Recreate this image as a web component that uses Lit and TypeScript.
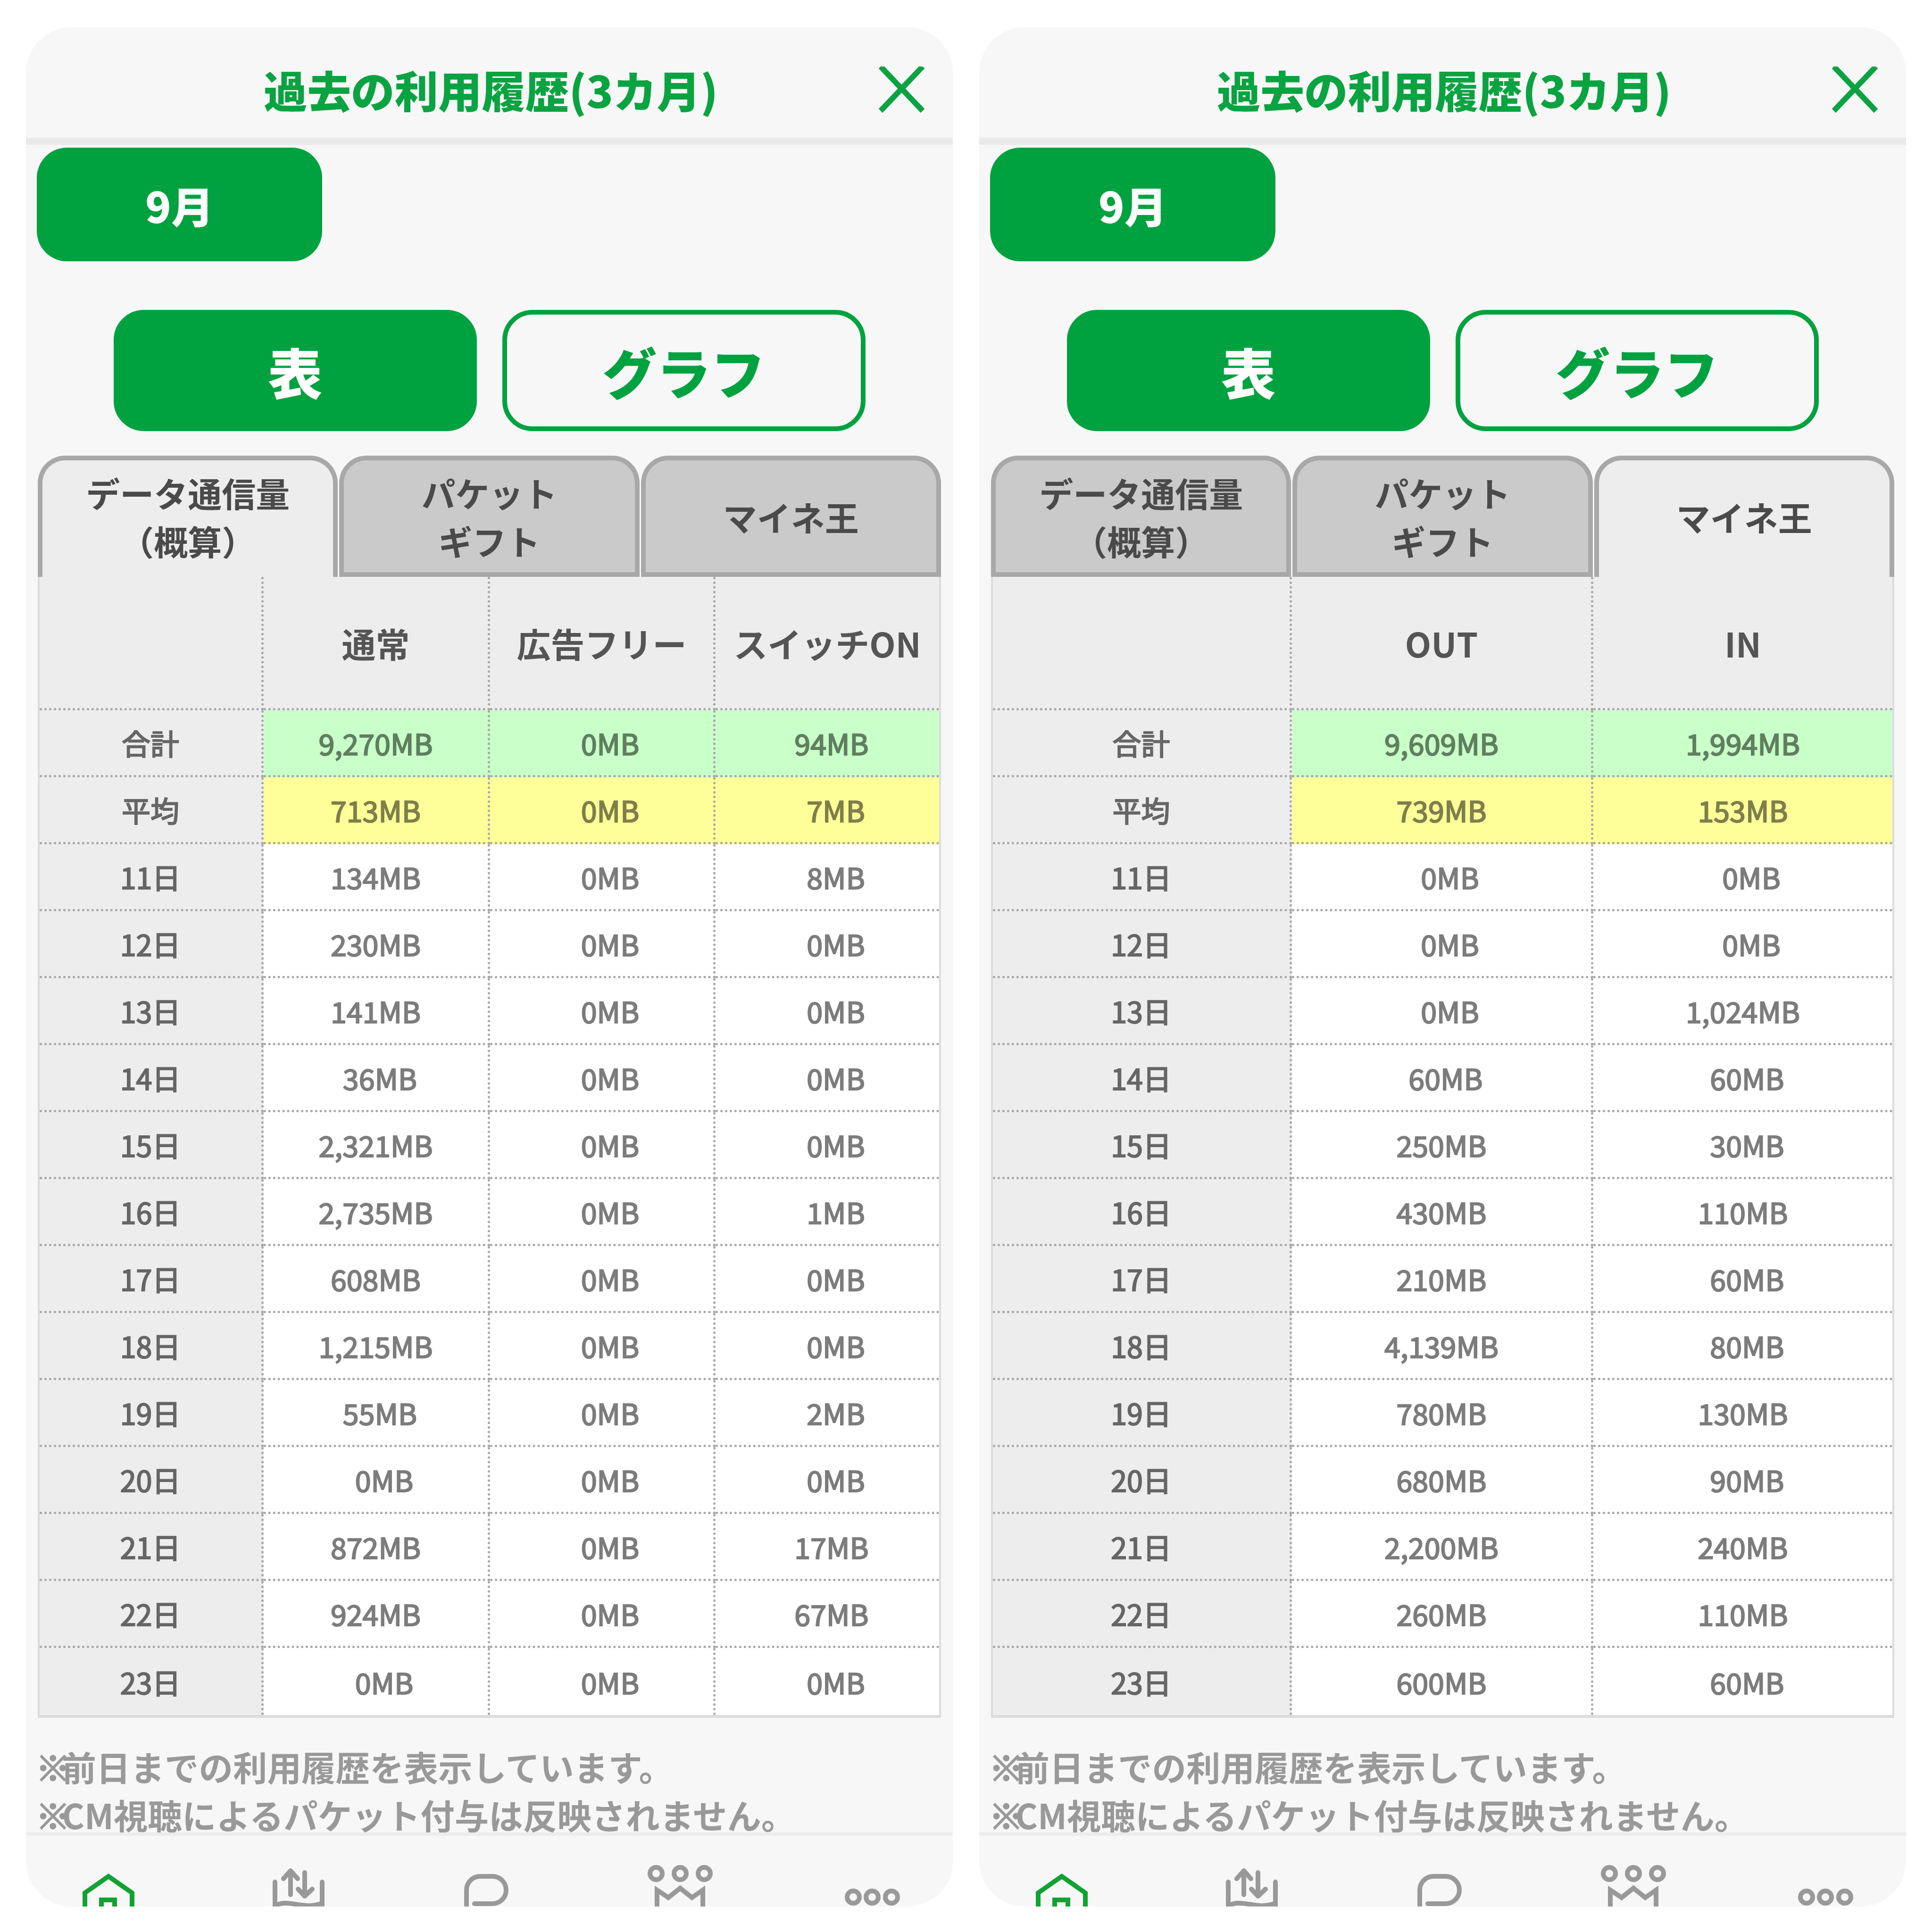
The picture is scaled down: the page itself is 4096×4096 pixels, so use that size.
import { LitElement, html, css, svg } from "lit";
import { customElement } from "lit/decorators.js";

const DAYS = [11, 12, 13, 14, 15, 16, 17, 18, 19, 20, 21, 22, 23];

interface Panel {
  active: number;
  columns: string;
  heads: string[];
  sum: string[];
  avg: string[];
  rows: string[][];
}

const LEFT: Panel = {
  active: 0,
  columns: "475px 480px 478px 1fr",
  heads: ["通常", "広告フリー", "スイッチON"],
  sum: ["9,270MB", "0MB", "94MB"],
  avg: ["713MB", "0MB", "7MB"],
  rows: [
    ["134MB", "0MB", "8MB"],
    ["230MB", "0MB", "0MB"],
    ["141MB", "0MB", "0MB"],
    ["36MB", "0MB", "0MB"],
    ["2,321MB", "0MB", "0MB"],
    ["2,735MB", "0MB", "1MB"],
    ["608MB", "0MB", "0MB"],
    ["1,215MB", "0MB", "0MB"],
    ["55MB", "0MB", "2MB"],
    ["0MB", "0MB", "0MB"],
    ["872MB", "0MB", "17MB"],
    ["924MB", "0MB", "67MB"],
    ["0MB", "0MB", "0MB"],
  ],
};

const RIGHT: Panel = {
  active: 2,
  columns: "634px 639px 1fr",
  heads: ["OUT", "IN"],
  sum: ["9,609MB", "1,994MB"],
  avg: ["739MB", "153MB"],
  rows: [
    ["0MB", "0MB"],
    ["0MB", "0MB"],
    ["0MB", "1,024MB"],
    ["60MB", "60MB"],
    ["250MB", "30MB"],
    ["430MB", "110MB"],
    ["210MB", "60MB"],
    ["4,139MB", "80MB"],
    ["780MB", "130MB"],
    ["680MB", "90MB"],
    ["2,200MB", "240MB"],
    ["260MB", "110MB"],
    ["600MB", "60MB"],
  ],
};

const TABS = [
  ["データ通信量", "（概算）"],
  ["パケット", "ギフト"],
  ["マイネ王"],
];

function padClass(v: string): string {
  const digits = v.replace(/[^0-9]/g, "").length;
  return digits === 1 ? "p2" : digits === 2 ? "p1" : "";
}

const homeIcon = svg`<path class="g" d="M10 175V128L60 93L110 128V175"/><path class="g" d="M45 175V143H73V175"/>`;
const dataIcon = svg`
  <path class="s" d="M43 132V82M28 98L43 81L58 98"/>
  <path class="s" d="M73 85V134M59 120L73 135L89 120"/>
  <path class="s" d="M10 105V170M110 105V170"/>
  <path class="s" d="M10 156C36 138 70 166 110 150"/>`;
const chatIcon = svg`<path class="s" d="M13 180V122A29 29 0 0 1 42 93H68A29 29 0 0 1 97 122A29 29 0 0 1 68 151H30"/>`;
const crownIcon = svg`
  <circle class="s" cx="12" cy="87" r="13"/><circle class="s" cx="63" cy="87" r="13"/><circle class="s" cx="114" cy="87" r="13"/>
  <path class="m" d="M14 180V122L38 138L63 118L88 138L111 122V180"/>`;
const moreIcon = svg`<circle class="s" cx="27" cy="137" r="13"/><circle class="s" cx="67" cy="137" r="13"/><circle class="s" cx="108" cy="137" r="13"/>`;

@customElement("app-root")
export class AppRoot extends LitElement {
  static styles = css`
    :host {
      display: flex;
      width: 4096px;
      height: 4096px;
      box-sizing: border-box;
      padding: 58px 55px 54px;
      gap: 56px;
      background: #fff;
      font-family: "Noto Sans CJK JP", "Noto Sans", sans-serif;
    }
    .panel {
      width: 1965px;
      height: 3984px;
      background: #f7f7f7;
      border-radius: 96px;
      overflow: hidden;
      display: flex;
      flex-direction: column;
    }
    .header {
      position: relative;
      flex: none;
      height: 234px;
      border-bottom: 15px solid #e9e9e9;
      display: flex;
      align-items: center;
      justify-content: center;
    }
    .title {
      font-size: 92.5px;
      font-weight: 900;
      color: #0aa341;
      line-height: 1;
      margin-top: 28px;
      margin-left: 6px;
    }
    .close {
      position: absolute;
      left: 1808px;
      top: 83px;
      width: 97px;
      height: 100px;
    }
    .close path {
      stroke: #0aa341;
      stroke-width: 12;
      fill: none;
    }
    .main {
      flex: 1;
      min-height: 0;
      overflow: hidden;
      padding: 6px 25px 0;
    }
    .month {
      width: 605px;
      height: 241px;
      margin-left: -2px;
      border-radius: 64px;
      background: #00a23f;
      color: #fff;
      font-size: 90px;
      font-weight: 900;
      display: flex;
      align-items: center;
      justify-content: center;
    }
    .modes {
      display: flex;
      justify-content: center;
      gap: 54px;
      margin-top: 103px;
    }
    .mode {
      width: 770px;
      height: 257px;
      box-sizing: border-box;
      border-radius: 64px;
      font-size: 115px;
      font-weight: 900;
      display: flex;
      align-items: center;
      justify-content: center;
      border: 10px solid #00a23f;
    }
    .mode.on {
      background: #00a23f;
      color: #fff;
    }
    .mode.off {
      color: #00a23f;
    }
    .tabs {
      display: grid;
      grid-template-columns: repeat(3, 1fr);
      gap: 3px;
      margin-top: 52px;
      height: 257px;
    }
    .tab {
      box-sizing: border-box;
      border: 10px solid #a8a8a8;
      border-radius: 58px 58px 0 0;
      background: #cacaca;
      color: #4a4a4a;
      font-size: 72px;
      font-weight: 700;
      line-height: 102px;
      text-align: center;
      display: flex;
      flex-direction: column;
      justify-content: center;
    }
    .tab.on {
      background: #ededed;
      border-bottom: none;
      padding-bottom: 10px;
    }
    .table {
      display: grid;
      grid-template-rows: 283px;
      grid-auto-rows: 142px;
      box-sizing: border-box;
      border-left: 4px solid #dcdcdc;
      border-right: 4px solid #dcdcdc;
      border-bottom: 6px solid #dcdcdc;
    }
    .cell {
      box-sizing: border-box;
      display: flex;
      align-items: center;
      justify-content: center;
      border-right: 5px dotted #a6a6a6;
      border-bottom: 5px dotted #a6a6a6;
      font-size: 61px;
      font-weight: 400;
      -webkit-text-stroke: 2.2px currentColor;
      color: #7c7c7c;
      background: #fff;
      white-space: nowrap;
    }
    .cell.last-col {
      border-right: none;
    }
    .cell.last-row {
      border-bottom: none;
    }
    .cell.p1 {
      padding-left: 18px;
    }
    .cell.p2 {
      padding-left: 36px;
    }
    .cell.side {
      background: #ededed;
      color: #666;
    }
    .cell.head {
      background: #ededed;
      color: #555;
      font-size: 72px;
      font-weight: 700;
      -webkit-text-stroke: 0;
    }
    .cell.sum {
      background: #c9ffc9;
      color: #5f7f5f;
    }
    .cell.avg {
      background: #ffff99;
      color: #7f7f4c;
    }
    .notes {
      margin-top: 52px;
      margin-left: -4px;
      font-size: 72.5px;
      line-height: 102px;
      font-weight: 700;
      color: #999;
      white-space: nowrap;
    }
    .mark {
      letter-spacing: -17px;
      -webkit-text-stroke: 3px currentColor;
    }
    .nav {
      flex: none;
      height: 157px;
      overflow: hidden;
      box-sizing: border-box;
      display: flex;
      gap: 283px;
      padding-left: 115px;
      position: relative;
    }
    .nav::before {
      content: "";
      position: absolute;
      left: 0;
      right: 0;
      top: 0;
      height: 7px;
      background: #ececec;
    }
    .nav svg {
      flex: none;
      width: 120px;
      height: 157px;
      overflow: visible;
    }
    .nav path,
    .nav circle {
      fill: none;
      stroke-width: 10;
      stroke-linecap: round;
      stroke-linejoin: round;
    }
    .nav .g {
      stroke: #12a232;
      stroke-linejoin: miter;
      stroke-linecap: butt;
    }
    .nav .s {
      stroke: #999;
    }
    .nav .m {
      stroke: #999;
      stroke-linejoin: miter;
      stroke-linecap: butt;
    }
  `;

  private icon(body: unknown) {
    return html`<svg viewBox="0 0 120 157">${body}</svg>`;
  }

  private row(label: string, vals: string[], kind: string, lastRow = false) {
    const rowCls = lastRow ? "last-row" : "";
    return html`
      <div class="cell side ${rowCls}">${label}</div>
      ${vals.map(
        (v, i) => html`<div
          class="cell ${kind} ${rowCls} ${padClass(v)} ${i === vals.length - 1 ? "last-col" : ""}"
        >
          ${v}
        </div>`,
      )}
    `;
  }

  private panel(p: Panel) {
    return html`
      <section class="panel">
        <div class="header">
          <div class="title">過去の利用履歴(3カ月)</div>
          <svg class="close" viewBox="0 0 100 100" preserveAspectRatio="none"><path d="M4 0L96 94M96 0L4 94" /></svg>
        </div>
        <div class="main">
          <div class="month">9月</div>
          <div class="modes">
            <div class="mode on">表</div>
            <div class="mode off">グラフ</div>
          </div>
          <div class="tabs">
            ${TABS.map(
              (t, i) => html`<div class="tab ${i === p.active ? "on" : ""}">
                ${t.map((l) => html`<div>${l}</div>`)}
              </div>`,
            )}
          </div>
          <div class="table" style="grid-template-columns: ${p.columns}">
            <div class="cell head"></div>
            ${p.heads.map(
              (h, i) => html`<div class="cell head ${i === p.heads.length - 1 ? "last-col" : ""}">${h}</div>`,
            )}
            ${this.row("合計", p.sum, "sum")} ${this.row("平均", p.avg, "avg")}
            ${DAYS.map((d, i) => this.row(`${d}日`, p.rows[i], "", i === DAYS.length - 1))}
          </div>
          <div class="notes">
            <div><span class="mark">※</span>前日までの利用履歴を表示しています。</div>
            <div><span class="mark">※</span>CM視聴によるパケット付与は反映されません。</div>
          </div>
        </div>
        <div class="nav">
          ${this.icon(homeIcon)} ${this.icon(dataIcon)} ${this.icon(chatIcon)} ${this.icon(crownIcon)}
          ${this.icon(moreIcon)}
        </div>
      </section>
    `;
  }

  render() {
    return html`${this.panel(LEFT)}${this.panel(RIGHT)}`;
  }
}
